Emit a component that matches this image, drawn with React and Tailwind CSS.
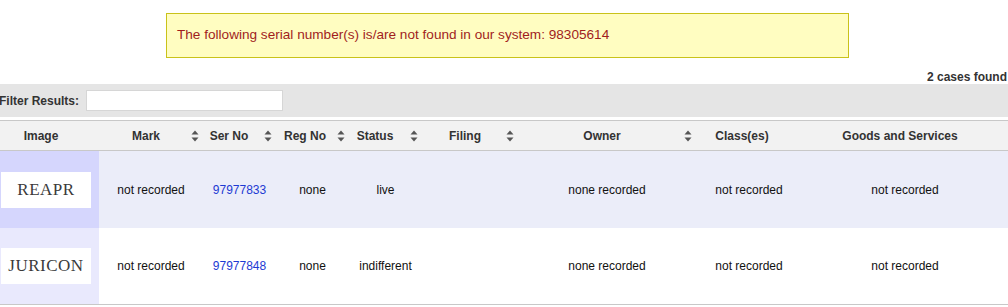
import React from "react";

const cols = "grid grid-cols-[99px_104px_73px_73px_73px_96px_178px_106px_206px]";

function SortIcon() {
  return (
    <svg className="absolute right-[4px] top-1/2 -translate-y-1/2" width="8" height="12" viewBox="0 0 8 12">
      <path d="M4 0.5 L7.5 4.5 L0.5 4.5 Z" fill="#555" />
      <path d="M4 11.5 L7.5 7.5 L0.5 7.5 Z" fill="#555" />
    </svg>
  );
}

const headers = [
  { t: "Image", pr: "pr-[17px]", s: false },
  { t: "Mark", pr: "pr-[10px]", s: true },
  { t: "Ser No", pr: "pr-[21px]", s: true },
  { t: "Reg No", pr: "pr-[15px]", s: true },
  { t: "Status", pr: "pr-[21px]", s: true },
  { t: "Filing", pr: "pr-[10px]", s: true },
  { t: "Owner", pr: "pr-[10px]", s: true },
  { t: "Class(es)", pr: "pr-[14px]", s: false },
  { t: "Goods and Services", pr: "pr-[10px]", s: false },
];

const rows = [
  { img: "REAPR", ser: "97977833", status: "live", bg: "bg-[#ebedf9]", imgBg: "bg-[#d5d6fd]" },
  { img: "JURICON", ser: "97977848", status: "indifferent", bg: "bg-white", imgBg: "bg-[#e9e9fd]" },
];

export default function App() {
  return (
    <div className="w-[1008px] h-[307px] bg-white overflow-hidden font-['Liberation_Sans',Arial,sans-serif] text-[12px]">
      <div className="pt-[13px] pl-[166px]">
        <div className="w-[683px] h-[45px] border border-[#c9c21a] bg-[#fffdc1] flex items-center pl-[10px] text-[#a11d1d] text-[13.6px]">
          The following serial number(s) is/are not found in our system: 98305614
        </div>
      </div>
      <div className="h-[26px] flex items-end justify-end pr-[1px] pb-[1px] font-bold text-[#333] leading-none">
        2 cases found
      </div>
      <div className="h-[33px] bg-[#e5e5e5] flex items-center">
        <span className="font-bold text-[#333] ml-[-1px]">Filter Results:</span>
        <input className="ml-[7px] w-[197px] h-[21px] bg-white border border-[#d6d6d6] outline-none" />
      </div>
      <div className="h-[3px]" />
      <div className={`${cols} h-[31px] bg-[#f2f2f2] border-y border-[#c8c8c8]`}>
        {headers.map((h) => (
          <div key={h.t} className={`relative flex items-center justify-center font-bold text-[#333] ${h.pr}`}>
            {h.t}
            {h.s && <SortIcon />}
          </div>
        ))}
      </div>
      {rows.map((r, i) => (
        <div key={r.img} className={`${cols} h-[77px] ${r.bg} ${i === 1 ? "border-b border-[#c8c8c8]" : ""} text-[#111]`}>
          <div className={`${r.imgBg} flex items-center`}>
            <div className="ml-[1px] w-[90px] h-[36px] bg-white flex items-center justify-center font-['Liberation_Serif','Times_New_Roman',serif] text-[17px] text-[#3a3a3a] tracking-[0.5px]">
              {r.img}
            </div>
          </div>
          <div className="flex items-center justify-center">not recorded</div>
          <div className="flex items-center justify-center text-[#1d3ad3]">{r.ser}</div>
          <div className="flex items-center justify-center">none</div>
          <div className="flex items-center justify-center">{r.status}</div>
          <div className="flex items-center justify-center"></div>
          <div className="flex items-center justify-center">none recorded</div>
          <div className="flex items-center justify-center">not recorded</div>
          <div className="flex items-center justify-center">not recorded</div>
        </div>
      ))}
    </div>
  );
}
